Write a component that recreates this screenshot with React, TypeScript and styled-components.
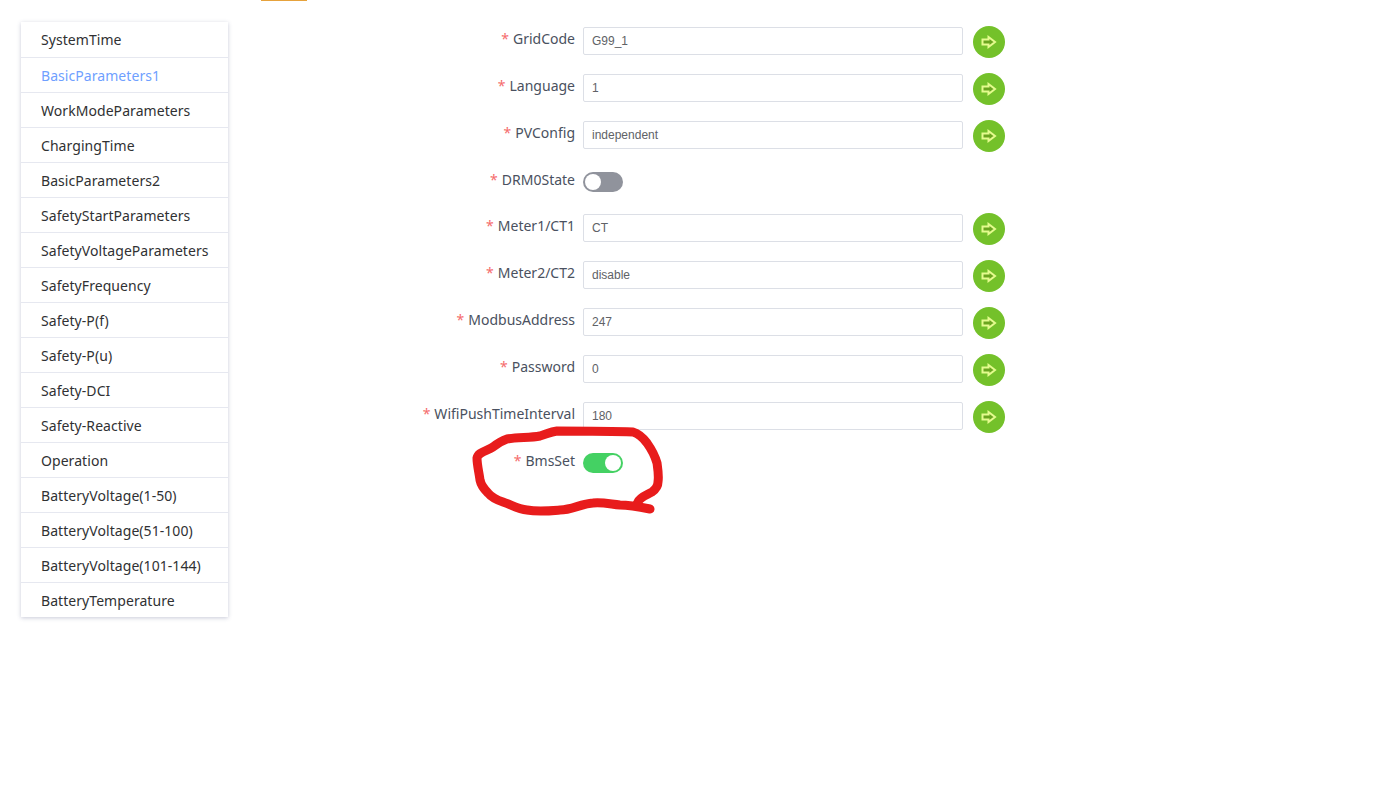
import React, { FC, useState } from 'react';
import styled, { createGlobalStyle } from 'styled-components';

const GlobalStyle = createGlobalStyle`
    html, body {
        margin: 0;
        padding: 0;
        background: #ffffff;
        font-family: "Noto Sans", "Liberation Sans", sans-serif;
    }
`;

const Page = styled.div`
    position: relative;
    width: 1375px;
    height: 808px;
    overflow: hidden;
`;

const TopTab = styled.div`
    width: 46px;
    height: 1px;
    margin-left: 261px;
    background: #e6a23c;
`;

const Content = styled.div`
    display: flex;
    align-items: flex-start;
    padding: 21px 0 0 21px;
`;

const Menu = styled.ul`
    width: 207px;
    margin: 0;
    padding: 0;
    list-style: none;
    background: #fff;
    box-shadow: 0 1px 4px rgba(60, 70, 120, 0.28);
`;

const MenuItem = styled.li<{ $active?: boolean }>`
    height: 35px;
    box-sizing: border-box;
    padding-left: 20px;
    line-height: 36px;
    font-size: 14px;
    letter-spacing: 0.06px;
    color: ${(p) => (p.$active ? '#6f9fff' : '#303133')};
    border-top: 1px solid #e6e8f0;

    &:first-child {
        border-top: none;
        line-height: 35px;
    }
`;

const Form = styled.div`
    display: flex;
    flex-direction: column;
    gap: 18.86px;
    margin: 5px 0 0 20px;
`;

const Row = styled.div`
    display: flex;
    align-items: center;
    height: 28px;
`;

const Label = styled.label`
    width: 335px;
    padding-right: 8px;
    box-sizing: border-box;
    text-align: right;
    font-size: 14px;
    line-height: 24px;
    margin-top: -4px;
    color: #4a5160;
    white-space: nowrap;
`;

const Star = styled.span`
    color: #f56c6c;
    margin-right: 4px;
`;

const Input = styled.input`
    width: 380px;
    height: 28px;
    box-sizing: border-box;
    padding: 0 8px;
    border: 1px solid #dcdfe6;
    border-radius: 2px;
    outline: none;
    font-family: "Liberation Sans", Arial, sans-serif;
    font-size: 12px;
    color: #606266;
`;

const SendButton = styled.button`
    display: flex;
    align-items: center;
    justify-content: center;
    flex: none;
    width: 32px;
    height: 32px;
    margin: 2px 0 0 10px;
    padding: 0;
    border: none;
    border-radius: 50%;
    background: #74c12a;
`;

const Switch = styled.span<{ $on?: boolean }>`
    position: relative;
    display: block;
    width: 40px;
    height: 20px;
    border-radius: 10px;
    background: ${(p) => (p.$on ? '#44d163' : '#90939c')};

    &::after {
        content: '';
        position: absolute;
        top: 2px;
        left: ${(p) => (p.$on ? '22px' : '2px')};
        width: 16px;
        height: 16px;
        border-radius: 50%;
        background: #fff;
    }
`;

const Scribble = styled.svg`
    position: absolute;
    left: 0;
    top: 0;
    pointer-events: none;
`;

const ArrowIcon: FC = () => (
    <svg width="16" height="14" viewBox="0 0 16 14">
        <path d="M1.5 4.5h6V2L14 7l-6.5 5V9.5h-6z" fill="#6aa51f" stroke="#e4fb8e" strokeWidth="2" strokeLinejoin="miter" />
    </svg>
);

const menuItems = [
    'SystemTime',
    'BasicParameters1',
    'WorkModeParameters',
    'ChargingTime',
    'BasicParameters2',
    'SafetyStartParameters',
    'SafetyVoltageParameters',
    'SafetyFrequency',
    'Safety-P(f)',
    'Safety-P(u)',
    'Safety-DCI',
    'Safety-Reactive',
    'Operation',
    'BatteryVoltage(1-50)',
    'BatteryVoltage(51-100)',
    'BatteryVoltage(101-144)',
    'BatteryTemperature',
];

type Field = { label: string; value?: string; on?: boolean };

const fields: Field[] = [
    { label: 'GridCode', value: 'G99_1' },
    { label: 'Language', value: '1' },
    { label: 'PVConfig', value: 'independent' },
    { label: 'DRM0State', on: false },
    { label: 'Meter1/CT1', value: 'CT' },
    { label: 'Meter2/CT2', value: 'disable' },
    { label: 'ModbusAddress', value: '247' },
    { label: 'Password', value: '0' },
    { label: 'WifiPushTimeInterval', value: '180' },
    { label: 'BmsSet', on: true },
];

const App: FC = () => {
    const [values] = useState(fields);
    return (
        <Page>
            <GlobalStyle />
            <TopTab />
            <Content>
                <Menu>
                    {menuItems.map((item) => (
                        <MenuItem key={item} $active={item === 'BasicParameters1'}>
                            {item}
                        </MenuItem>
                    ))}
                </Menu>
                <Form>
                    {values.map((f) => (
                        <Row key={f.label}>
                            <Label>
                                <Star>*</Star>
                                {f.label}
                            </Label>
                            {f.value !== undefined ? (
                                <>
                                    <Input defaultValue={f.value} />
                                    <SendButton>
                                        <ArrowIcon />
                                    </SendButton>
                                </>
                            ) : (
                                <Switch $on={f.on} />
                            )}
                        </Row>
                    ))}
                </Form>
            </Content>
            <Scribble width="1375" height="808" viewBox="0 0 1375 808">
                <path
                    d="M650 509 C640 507 630 505 620 505 C610 504 602 502 593 503 C580 504 572 510 560 510 C548 511 538 512 527 510 C518 509 512 505 503 502 C497 500 492 498 488 493 C483 488 481 485 480 480 C479 472 477 465 477 458 C478 452 487 451 493 447 C498 443 501 441 507 439 C518 437 530 438 540 436 C547 434 550 432 557 431 C580 431 610 431 633 432 C640 434 644 439 647 443 C652 450 655 456 657 463 C658 470 659 476 658 482 C658 486 656 489 652 492 C647 495 640 497 638 502"
                    fill="none"
                    stroke="#e81c1c"
                    strokeWidth="9"
                    strokeLinecap="round"
                    strokeLinejoin="round"
                />
            </Scribble>
        </Page>
    );
};

export default App;
